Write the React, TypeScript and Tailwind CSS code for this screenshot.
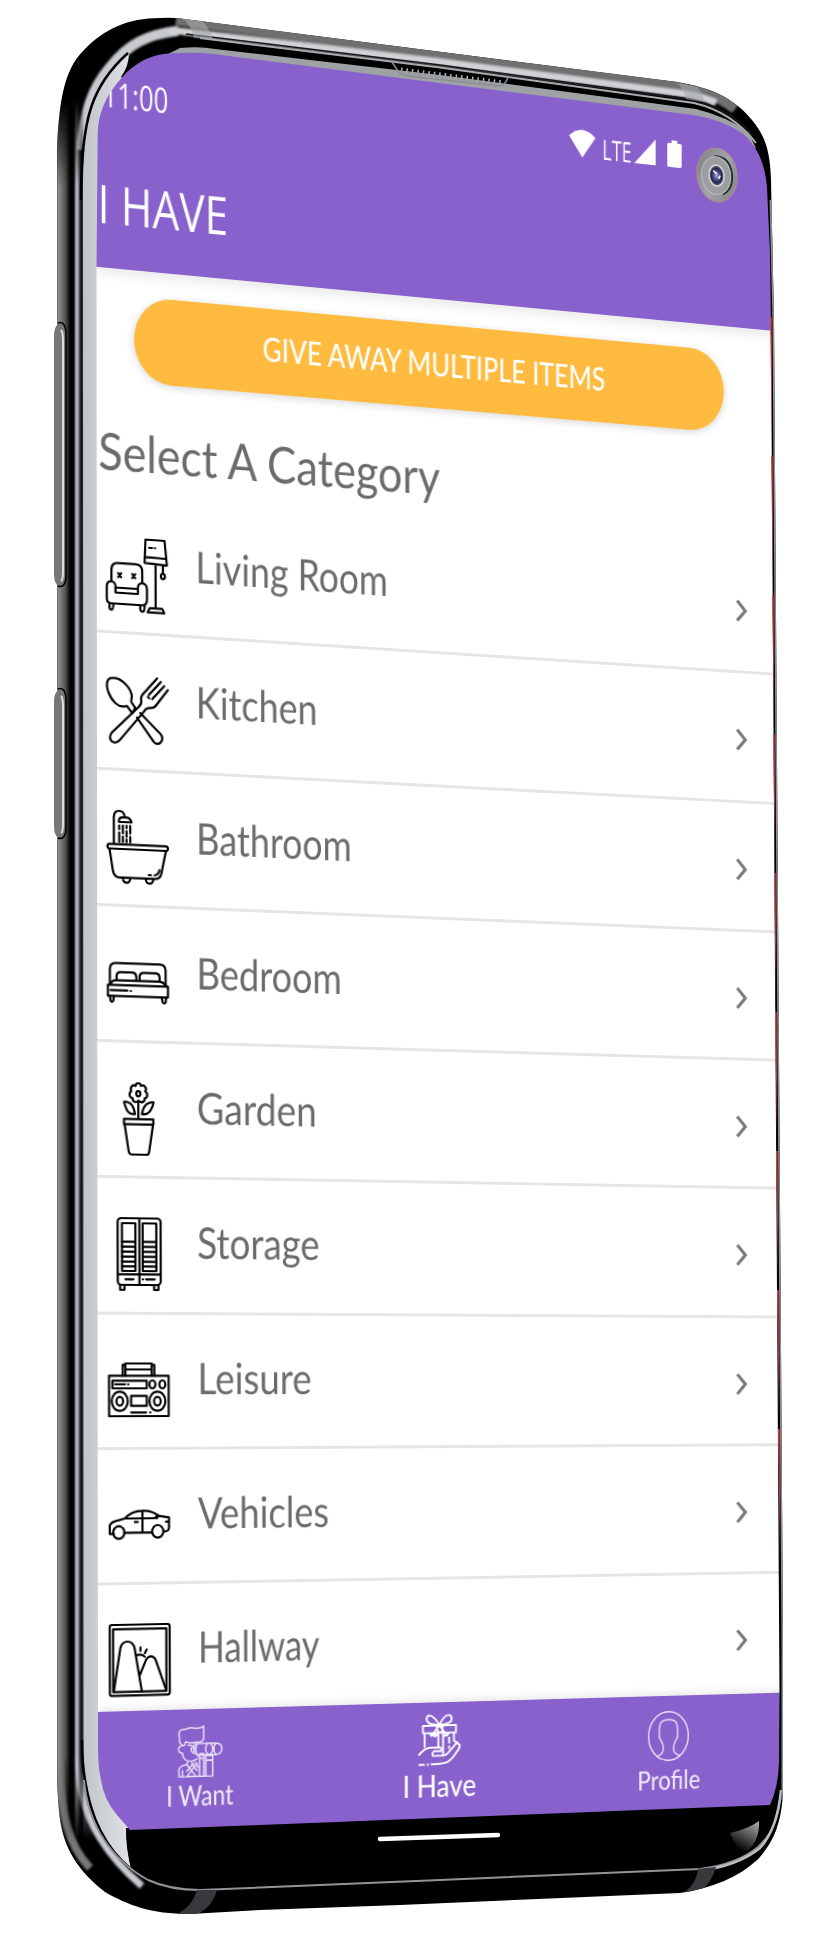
import { useLayoutEffect, useRef, useState } from "react";
import type { ReactNode } from "react";

type Point = [number, number];

/* Anchor rectangle on the flat screen and the quad it is projected to. */
const FLAT = { top: 266, width: 680, height: 1565 };
const QUAD: [Point, Point, Point, Point] = [
  [93.5, 266.5],
  [775, 331],
  [775, 1805],
  [98, 1831],
];

function projection(): string {
  const [p0, p1, p2, p3] = QUAD;
  const d1: Point = [p1[0] - p2[0], p1[1] - p2[1]];
  const d2: Point = [p3[0] - p2[0], p3[1] - p2[1]];
  const s: Point = [p0[0] - p1[0] + p2[0] - p3[0], p0[1] - p1[1] + p2[1] - p3[1]];
  const det = d1[0] * d2[1] - d2[0] * d1[1];
  const g = (s[0] * d2[1] - d2[0] * s[1]) / det;
  const h = (d1[0] * s[1] - s[0] * d1[1]) / det;
  const rows = [
    [p1[0] - p0[0] + g * p1[0], p3[0] - p0[0] + h * p3[0], p0[0]],
    [p1[1] - p0[1] + g * p1[1], p3[1] - p0[1] + h * p3[1], p0[1]],
    [g, h, 1],
  ].map(([a, b, c]) => [a / FLAT.width, b / FLAT.height, c - (b * FLAT.top) / FLAT.height]);
  const [x, y, w] = rows;
  const k = w[2];
  const m = [x[0], y[0], 0, w[0], x[1], y[1], 0, w[1], 0, 0, k, 0, x[2], y[2], 0, w[2]].map((n) => n / k);
  return `matrix3d(${m.map((n) => n.toFixed(10)).join(",")})`;
}

/* One line of text squeezed horizontally to a given width. */
function Fit({ width, className, children }: { width: number; className: string; children: ReactNode }) {
  const ref = useRef<HTMLSpanElement>(null);
  const [scale, setScale] = useState(1);
  useLayoutEffect(() => {
    if (ref.current) setScale(width / ref.current.offsetWidth);
  }, [width]);
  return (
    <span className="block shrink-0" style={{ width }}>
      <span
        ref={ref}
        className={`inline-block origin-left leading-none whitespace-nowrap align-top ${className}`}
        style={{ transform: `scaleX(${scale})` }}
      >
        {children}
      </span>
    </span>
  );
}

function RowIcon({ children }: { children: ReactNode }) {
  return (
    <svg
      viewBox="0 0 183 222"
      preserveAspectRatio="none"
      className="mt-[39px] ml-[10.500px] h-[74px] w-[58px] shrink-0 overflow-visible fill-none stroke-black [stroke-linecap:round] [stroke-linejoin:round] stroke-[6.500]"
    >
      {children}
    </svg>
  );
}

const LivingIcon = (
  <>
    <path d="M118 3H175L182 77L115 73ZM117 55L180 57M129 27H138M146 27H147M148 76V208M130 208H168L174 221H124ZM170 77V101" />
    <ellipse cx="170" cy="110" rx="6" ry="8" />
    <path d="M16 134V100Q16 79 36 79H88Q108 79 108 100V134M10 201V214Q10 220 16 220Q21 220 22 201M102 201V214Q103 220 109 220Q115 220 115 201" />
    <path d="M2 152Q2 135 15 135Q28 136 28 150V168H95V150Q95 136 108 135Q122 136 122 152V184Q122 201 108 201H15Q2 201 2 186ZM28 153H95" />
    <path d="M36 109L45 121M45 109L36 121M78 109L87 121M87 109L78 121" />
  </>
);

const KitchenIcon = (
  <>
    <path d="M60 98C35 108 15 83 6 60C-3 34 2 16 20 16C45 14 72 42 76 66C77 76 70 82 76 88L86 102L77 119L62 99" />
    <path d="M152 10L107 62Q102 68 104 78Q106 90 97 98L16 180Q5 196 15 206Q27 215 39 202L112 112Q118 100 130 100Q142 100 147 93L184 43M163 20L127 61M173 32L137 73M128 71L124 67M58 137L46 150M91 131L141 201Q151 212 162 202Q172 190 162 177L101 117" />
  </>
);

const BathroomIcon = (
  <>
    <path d="M21 102V22Q22 3 37 3Q52 3 54 22M36 36Q36 22 46 22H62Q71 24 74 36Z" />
    <path d="M37 47V58M37 68V96M48 47V70M48 80V96M59 47V54M59 63V80M70 47V70M70 80V96M59 88V96" />
    <rect x="2" y="103" width="181" height="14" rx="7" />
    <path d="M8 118L18 184Q22 203 38 203H144Q160 202 163 186L177 118M48 204Q48 218 59 218Q69 217 70 204M116 204Q117 218 128 218Q138 217 139 204M125 192H132M143 192Q155 190 157 176" />
  </>
);

const BedroomIcon = (
  <>
    <path d="M8 116V70Q9 52 25 52H158Q174 52 175 70V114M2 118H182V151H2ZM10 134H60M70 135H71" />
    <path d="M28 100V91Q29 79 39 79H77Q86 80 87 91V103M97 103V91Q98 79 108 79H147Q156 80 157 91V103M10 116Q14 104 26 104H158Q170 106 176 116" />
    <path d="M8 152L10 166Q13 172 18 166L20 152M163 152L166 166Q171 172 175 166L176 152" />
  </>
);

const GardenIcon = (
  <>
    <path d="M84 12C84 1 100 1 100 12C108 6 120 16 113 28C122 34 120 47 111 49C112 61 100 65 93 56C86 65 74 60 75 49C64 47 63 34 71 28C66 15 76 7 84 12Z" />
    <ellipse cx="92" cy="35" rx="6" ry="8" />
    <path d="M92 62V111M49 61Q60 58 70 67Q79 77 82 97Q66 99 58 86Q53 76 49 61ZM138 61Q127 58 116 67Q106 77 103 97Q119 99 128 86Q135 76 138 61Z" />
    <path d="M49 112H137V128H49ZM51 129L63 211Q65 219 73 219H116Q123 219 124 211L136 129" />
  </>
);

const StorageIcon = (
  <>
    <rect x="29" y="3" width="129" height="201" rx="11" />
    <path d="M94 3V204M30 172H157M42 18H82V162H42ZM104 18H145V162H104ZM52 187H76M104 187H105M114 187H140M36 205V219H49V205M138 205V219H151V205" />
    <path d="M42 74H82M42 89H82M42 104H82M42 119H82M42 134H82M42 148H82M104 74H145M104 89H145M104 104H145M104 119H145M104 134H145M104 148H145" />
  </>
);

const LeisureIcon = (
  <>
    <path d="M2 67H181V189H2ZM12 82H115V105H12ZM20 93H50M59 93H60M68 128H115V158H68ZM68 178H113M125 178H126" />
    <ellipse cx="132" cy="93" rx="9" ry="12" />
    <ellipse cx="162" cy="93" rx="9" ry="12" />
    <ellipse cx="34" cy="144" rx="24" ry="29" />
    <ellipse cx="34" cy="144" rx="10" ry="13" />
    <ellipse cx="147" cy="144" rx="24" ry="29" />
    <ellipse cx="147" cy="144" rx="10" ry="13" />
    <path d="M43 67V34H51V67M130 67V34H138V67M51 48H130M51 48V30H130V48" />
  </>
);

const VehiclesIcon = (
  <>
    <path d="M15 136H3V110Q8 99 30 95L48 90Q68 67 101 67Q131 66 149 83L181 88V120Q180 131 164 131M46 133H130M101 67V133M48 90H138L148 80M149 83L144 90M78 101H87M181 101H172" />
    <ellipse cx="30" cy="132" rx="17" ry="19" />
    <ellipse cx="147" cy="130" rx="17" ry="19" />
  </>
);

const HallwayIcon = (
  <>
    <rect x="2" y="3" width="180" height="214" rx="6" />
    <path d="M12 16H172V206H12Z" />
    <path d="M14 203L34 72Q39 54 55 54Q70 54 76 72L98 206M82 96Q98 90 107 101M92 156L110 112Q116 100 125 100Q135 100 140 112L170 200M94 72V83M113 79L107 90" />
  </>
);

const CATEGORIES: { name: string; width: number; icon: ReactNode }[] = [
  { name: "Living Room", width: 187, icon: LivingIcon },
  { name: "Kitchen", width: 118, icon: KitchenIcon },
  { name: "Bathroom", width: 151, icon: BathroomIcon },
  { name: "Bedroom", width: 141, icon: BedroomIcon },
  { name: "Garden", width: 116, icon: GardenIcon },
  { name: "Storage", width: 119, icon: StorageIcon },
  { name: "Leisure", width: 111, icon: LeisureIcon },
  { name: "Vehicles", width: 128, icon: VehiclesIcon },
  { name: "Hallway", width: 118, icon: HallwayIcon },
];

function Header() {
  return (
    <header className="relative z-10 flex h-[266px] w-[720px] shrink-0 flex-col bg-[#8961cc] text-white shadow-[0_4px_14px_rgba(0,0,0,0.1)]">
      <div className="flex h-[110px] items-end pb-[7px] pl-[9px]">
        <div className="-mb-[7px]">
          <Fit width={62} className="font-['Open_Sans'] text-[35px] font-medium">11:00</Fit>
        </div>
        <svg viewBox="0 0 27 29" className="ml-[395px] mb-[-2px] h-[29px] w-[27px] fill-white">
          <path d="M0 7.500Q13.500 -6.500 27 7.500L13.500 29Z" />
        </svg>
        <div className="-mb-[5px] ml-[7px]">
          <Fit width={30} className="font-['Open_Sans'] text-[29px] font-medium">LTE</Fit>
        </div>
        <svg viewBox="0 0 22 27" className="ml-[3px] mb-[-2px] h-[27px] w-[22px] fill-white">
          <path d="M22 0V27H0Z" />
        </svg>
        <svg viewBox="0 0 15 28" className="ml-[12px] mb-[-2px] h-[28px] w-[15px] fill-white">
          <path d="M4.500 0H10.500V3H13.500Q15 3 15 5V26Q15 28 13.500 28H1.500Q0 28 0 26V5Q0 3 1.500 3H4.500Z" />
        </svg>
      </div>
      <div className="mt-[65px] pl-[4px]">
        <Fit width={124} className="font-['Open_Sans'] text-[53px] font-medium">I HAVE</Fit>
      </div>
    </header>
  );
}

function CategoryRow({ name, width, icon }: { name: string; width: number; icon: ReactNode }) {
  return (
    <li className="flex h-[136.300px] w-[720px] shrink-0 items-start border-b-3 border-[#e5e5e5]">
      <RowIcon>{icon}</RowIcon>
      <div className="mt-[41px] ml-[27px] flex grow">
        <Fit width={width} className="text-[44px]">{name}</Fit>
      </div>
      <svg viewBox="0 0 11 22" className="mt-[59px] mr-[70px] h-[22px] w-[11px] shrink-0 overflow-visible fill-none stroke-[#7b7b7b] stroke-[3.300]">
        <path d="M1 0.500L9.500 11L1 21.500" />
      </svg>
    </li>
  );
}

function WantIcon() {
  return (
    <svg viewBox="0 0 130 154" preserveAspectRatio="none" className="mt-[17px] h-[52px] w-[43px] overflow-visible fill-none stroke-[#e6dcf6] stroke-[4.500] [stroke-linejoin:round]">
      <path d="M7 50L4 22Q6 8 22 10Q34 2 52 7Q66 8 76 1V38Q74 50 56 49Q36 53 24 46L19 58H14L7 50M19 58Q2 58 3 70Q5 82 14 80Q15 98 28 104Q45 110 58 98M30 55Q36 60 42 57M57 54Q45 56 39 70Q42 84 56 84L60 93" />
      <path d="M57 53H112Q129 54 129 70Q129 86 112 88H57Q49 70 57 53ZM82 70Q82 53 92 53Q102 56 102 70Q102 86 92 87Q82 86 82 70ZM106 70Q106 56 114 54M106 70Q106 84 114 88M50 62Q44 70 50 78" />
      <path d="M64 84H76V98H64ZM64 98V152M76 96V152M82 90H102V104H82ZM82 104V152H102V104M4 152V130Q6 118 24 116L30 108M4 152H82M14 132V152M26 114L52 150M58 110L28 150M40 112L58 136M48 110L26 136M52 110L60 126" />
    </svg>
  );
}

function HaveIcon() {
  return (
    <svg viewBox="0 0 123 157" preserveAspectRatio="none" className="mt-[12px] h-[54px] w-[42px] overflow-visible fill-none stroke-white stroke-[5.500] [stroke-linejoin:round]">
      <path d="M61 33Q44 2 30 4Q20 10 26 22Q34 32 61 33Q76 2 90 4Q101 8 96 22Q88 32 61 33ZM13 35H110V57H13ZM18 57V101M104 57V84M48 57V68L58 60V100M72 58V128M61 34L38 66L32 57M61 34L84 66L90 57M52 34L58 56H68L72 34M90 70V90M90 97V106M72 70L80 64M48 68L40 60" />
      <path d="M0 124Q16 102 34 101H62Q70 104 66 112H46Q38 116 42 126H72Q82 126 92 112L106 96Q112 84 121 96Q122 104 112 116Q98 138 84 146Q74 151 50 151H36M0 152H18M24 152H30M104 84Q116 86 120 96" />
    </svg>
  );
}

function ProfileIcon() {
  return (
    <svg viewBox="0 0 122 150" preserveAspectRatio="none" className="mt-[16px] h-[53px] w-[43px] overflow-visible fill-none stroke-[#ece4f8] stroke-[4]">
      <ellipse cx="61" cy="75" rx="59" ry="73" />
      <path d="M26 135Q48 128 46 110Q46 98 38 86Q32 78 34 68Q33 58 36 40Q40 26 61 26Q82 26 86 40Q89 58 88 68Q90 78 84 86Q76 98 76 110Q74 128 96 135" />
    </svg>
  );
}

function BottomNav() {
  return (
    <nav className="relative z-10 grid h-[150px] w-[720px] shrink-0 grid-cols-[195px_275px_195px] bg-[#8961cc] text-[#ede6f8] shadow-[0_-2px_10px_rgba(0,0,0,0.1)]">
      <div className="flex flex-col items-center">
        <WantIcon />
        <div className="mt-[3px]"><Fit width={65} className="text-[29px] font-medium">I Want</Fit></div>
      </div>
      <div className="flex flex-col items-center text-white">
        <HaveIcon />
        <div className="mt-[4px]"><Fit width={74} className="text-[32px] font-medium">I Have</Fit></div>
      </div>
      <div className="flex flex-col items-center">
        <ProfileIcon />
        <div className="mt-[5px]"><Fit width={66} className="text-[28px] font-medium">Profile</Fit></div>
      </div>
    </nav>
  );
}

const OUTER =
  "M57 150C59 105 63 70 84 50C104 29 128 18 160 18Q172 17 184 19L677 82C712 88 734 98 752 120C765 136 770 150 771 180L774 320L783 1640V1790C782 1824 773 1842 758 1859C738 1878 712 1888 680 1893L400 1905L260 1910L190 1914C150 1914 128 1905 105 1892C80 1872 62 1850 59 1810Q57 1790 57 1760Z";

const RED_MARKS = [
  [771, 317], [772, 456], [773, 595], [774, 734], [775, 873], [776, 1012], [777, 1151], [778, 1290], [779, 1429],
];

function PhoneBody() {
  return (
    <svg viewBox="0 0 823 1940" className="absolute inset-0 h-[1940px] w-[823px] fill-none">
      <defs>
        <linearGradient id="side" gradientUnits="userSpaceOnUse" x1="56" y1="0" x2="98" y2="0">
          <stop offset="0" stopColor="#4a4a4a" />
          <stop offset="0.06" stopColor="#8b8b8b" />
          <stop offset="0.22" stopColor="#555" />
          <stop offset="0.34" stopColor="#000" />
          <stop offset="0.42" stopColor="#050505" />
          <stop offset="0.46" stopColor="#777b80" />
          <stop offset="0.5" stopColor="#c9ccd2" />
          <stop offset="0.55" stopColor="#60656b" />
          <stop offset="0.6" stopColor="#0b0e12" />
          <stop offset="0.64" stopColor="#30353a" />
          <stop offset="0.67" stopColor="#b4b9bf" />
          <stop offset="1" stopColor="#dcdee1" />
        </linearGradient>
        <linearGradient id="fade" gradientUnits="userSpaceOnUse" x1="0" y1="100" x2="0" y2="1840">
          <stop offset="0" stopColor="#fff" stopOpacity="0" />
          <stop offset="0.05" stopColor="#fff" />
          <stop offset="0.95" stopColor="#fff" />
          <stop offset="1" stopColor="#fff" stopOpacity="0" />
        </linearGradient>
        <linearGradient id="bezel" gradientUnits="userSpaceOnUse" x1="80" y1="0" x2="130" y2="0">
          <stop offset="0" stopColor="#bfc4c9" />
          <stop offset="1" stopColor="#dfe1e4" />
        </linearGradient>
        <linearGradient id="glint" x1="1" y1="0" x2="0.5" y2="1">
          <stop offset="0" stopColor="#b0b4b8" />
          <stop offset="1" stopColor="#000" />
        </linearGradient>
        <filter id="soft" x="-20%" y="-20%" width="140%" height="140%">
          <feGaussianBlur stdDeviation="1.200" />
        </filter>
        <clipPath id="body"><path d={OUTER} /></clipPath>
        <mask id="middle"><rect x="50" y="100" width="60" height="1740" fill="url(#fade)" /></mask>
      </defs>
      <path d={OUTER} className="fill-black" />
      <g clipPath="url(#body)">
        <g filter="url(#soft)">
          <path d="M176 19L440 54L684 86Q716 92 736 108" className="stroke-[#707070] stroke-[13]" />
          <path d="M82 150C84 112 92 88 110 67C128 44 148 34 178 31" className="stroke-[#c7cacf] stroke-[10]" />
          <path d="M170 30L440 62L684 94Q704 97 716 103" className="stroke-[#d0d2d5] stroke-[7]" />
          <path d="M60 1750C60 1815 68 1845 90 1868" className="stroke-[#777] stroke-[8]" />
          <path d="M77 1720C77 1790 84 1812 100 1838Q116 1864 142 1886" className="stroke-[#c7cacf] stroke-[7]" />
        </g>
        <path d="M186 34L440 65L690 99Q730 108 752 135" className="stroke-[#17191b] stroke-[1.500]" />
        <path d="M200 38L440 67.500L694 103Q732 112 756 143" className="stroke-[#a8abaf] stroke-2" />
        <path d="M168 54L180 48Q200 46 215 49L440 75L696 109Q728 117 748 132L756 148L700 130L440 92L200 62Z" className="fill-[#9fa2a5]" />
        <path d="M182 18Q191 25 194 38L213 39Q209 27 201 20ZM677 83Q684 89 686 99L704 102Q703 94 697 87Z" className="fill-[#a5a8aa] opacity-60" />
        <rect x="50" y="100" width="60" height="1740" fill="url(#side)" mask="url(#middle)" />
        <path d="M83 200C83 120 91 88 129 53Q129 66 121 77L140 90L140 1828L126 1828Q127 1850 131 1868C104 1848 83 1804 84 1740Z" fill="url(#bezel)" />
        <path d="M81 200C81 118 92 85 128 53M82 1740C82 1800 98 1842 131 1869" className="stroke-black stroke-[2.500]" />
        <path d="M126 1828H790V1850L700 1880L200 1894L131 1868Q126 1850 126 1828Z" className="fill-black" />
        <path d="M84 1780C88 1826 112 1860 148 1880Q170 1890 200 1890L440 1880L700 1869Q738 1864 758 1847Q777 1830 780 1800" className="stroke-[#8f9499] stroke-[2]" />
        <path d="M698 1871Q738 1866 760 1848Q777 1830 781 1790" className="stroke-[#babec2] stroke-[2.500]" />
        <path d="M197 1890H217Q213 1907 196 1915H176Q193 1906 197 1890ZM698 1869L716 1867Q710 1887 696 1893L680 1895Q696 1886 698 1869Z" className="fill-[#37393c]" />
        <path d="M730 1833Q748 1829 759 1821Q760 1842 745 1853Q735 1847 730 1833Z" fill="url(#glint)" />
        <path d="M771 200L774 320L783 1640V1800" className="stroke-[#8b9096] stroke-[3]" />
      </g>
      <path d="M59 324Q54 326 54 336V574Q54 584 59 586L63 586Q66 584 66 576V334Q66 325 63 323ZM59 690Q54 692 54 702V826Q54 836 59 838L63 838Q66 836 66 828V700Q66 691 63 689Z" className="fill-[#777]" />
      <path d="M61 330Q63 332 63 340V572Q63 580 61 581M61 696Q63 698 63 706V824Q63 832 61 833" className="stroke-[#dcdde6] stroke-2" />
      <path d="M58 323Q66 320 66 336V574Q66 589 58 586M58 689Q66 686 66 702V826Q66 841 58 838" className="stroke-black stroke-[1.500]" />
      <path d="M392 62L398 71Q401 75 408 76L498 86Q506 86 508 77" className="stroke-[#8b8d90] stroke-[1.500]" />
      <path d="M401 69L504 82" className="stroke-[#b5b7b9] stroke-[3] [stroke-dasharray:1.500_4]" />
      <path d="M403 72L503 85" className="stroke-[#8f9193] stroke-[2] [stroke-dasharray:1.500_4]" />
    </svg>
  );
}

function GlassDetails() {
  return (
    <svg viewBox="0 0 823 1940" className="pointer-events-none absolute inset-0 h-[1940px] w-[823px] fill-none">
      <defs>
        <linearGradient id="ring" x1="0" y1="0" x2="1" y2="1">
          <stop offset="0" stopColor="#77797b" />
          <stop offset="0.5" stopColor="#a3a5a8" />
          <stop offset="1" stopColor="#7e8083" />
        </linearGradient>
        <radialGradient id="lens">
          <stop offset="0" stopColor="#aab4e8" />
          <stop offset="0.35" stopColor="#565a96" />
          <stop offset="0.7" stopColor="#25264c" />
          <stop offset="1" stopColor="#747884" />
        </radialGradient>
      </defs>
      {RED_MARKS.map(([x, y]) => (
        <path key={y} d={`M${x - 1} ${y}h1.600L${x + 1} ${y + 130}Z`} className="fill-[#d84545]" />
      ))}
      <g transform="rotate(-8 717 175)">
        <ellipse cx="717" cy="175" rx="20" ry="27" fill="url(#ring)" className="stroke-[#b08a96] stroke-1" />
        <path d="M717 156Q732 158 732 176Q731 192 720 195" className="stroke-[#2b2d30] stroke-2" />
        <ellipse cx="716" cy="175.500" rx="14.500" ry="19" className="fill-[#9b9da1] stroke-[#b9bbbe] stroke-1" />
        <ellipse cx="716.500" cy="175.500" rx="7.500" ry="10.500" fill="url(#lens)" className="stroke-[#d3d5da] stroke-[1.500]" />
        <path d="M714 170L717 174M718 179L720 176" className="stroke-white stroke-[1.500]" />
      </g>
      <path d="M380 1839L498 1835" className="stroke-white stroke-[4.500] [stroke-linecap:round]" />
    </svg>
  );
}

export default function App() {
  return (
    <main className="relative h-[1940px] w-[823px] overflow-hidden bg-white font-['Lato',sans-serif]">
      <PhoneBody />
      <div className="absolute inset-0 [clip-path:path('M96.500_267L97.700_133C99_112_105_95_127_72C142_58_158_53_178_53Q198_52_213_54L400_78L693_115Q720_119_742_133Q764_151_767_187L770_253L771_330L779.500_1693L779_1763Q778_1788_770_1805L130_1830L117_1815Q104_1800_101_1780Q98_1768_98_1747Z')]">
        <div
          className="flex h-[1900px] w-[720px] origin-top-left flex-col overflow-hidden bg-white text-[#6b6b6b]"
          style={{ transform: projection() }}
        >
          <Header />
          <section className="flex h-[228px] shrink-0 flex-col">
            <button className="mt-[26px] ml-[37.500px] flex h-[86px] w-[588px] shrink-0 justify-center rounded-[36px/43px] bg-[#ffbb40] pt-[24px] text-white shadow-[0_2px_9px_rgba(0,0,0,0.16)]">
              <Fit width={342} className="text-[33.500px] font-medium">GIVE AWAY MULTIPLE ITEMS</Fit>
            </button>
            <h1 className="mt-[44px] ml-[4px]">
              <Fit width={331} className="text-[51px]">Select A Category</Fit>
            </h1>
          </section>
          <ul className="flex h-[1217px] shrink-0 flex-col overflow-hidden">
            {CATEGORIES.map((c) => (
              <CategoryRow key={c.name} {...c} />
            ))}
          </ul>
          <BottomNav />
        </div>
      </div>
      <GlassDetails />
    </main>
  );
}
